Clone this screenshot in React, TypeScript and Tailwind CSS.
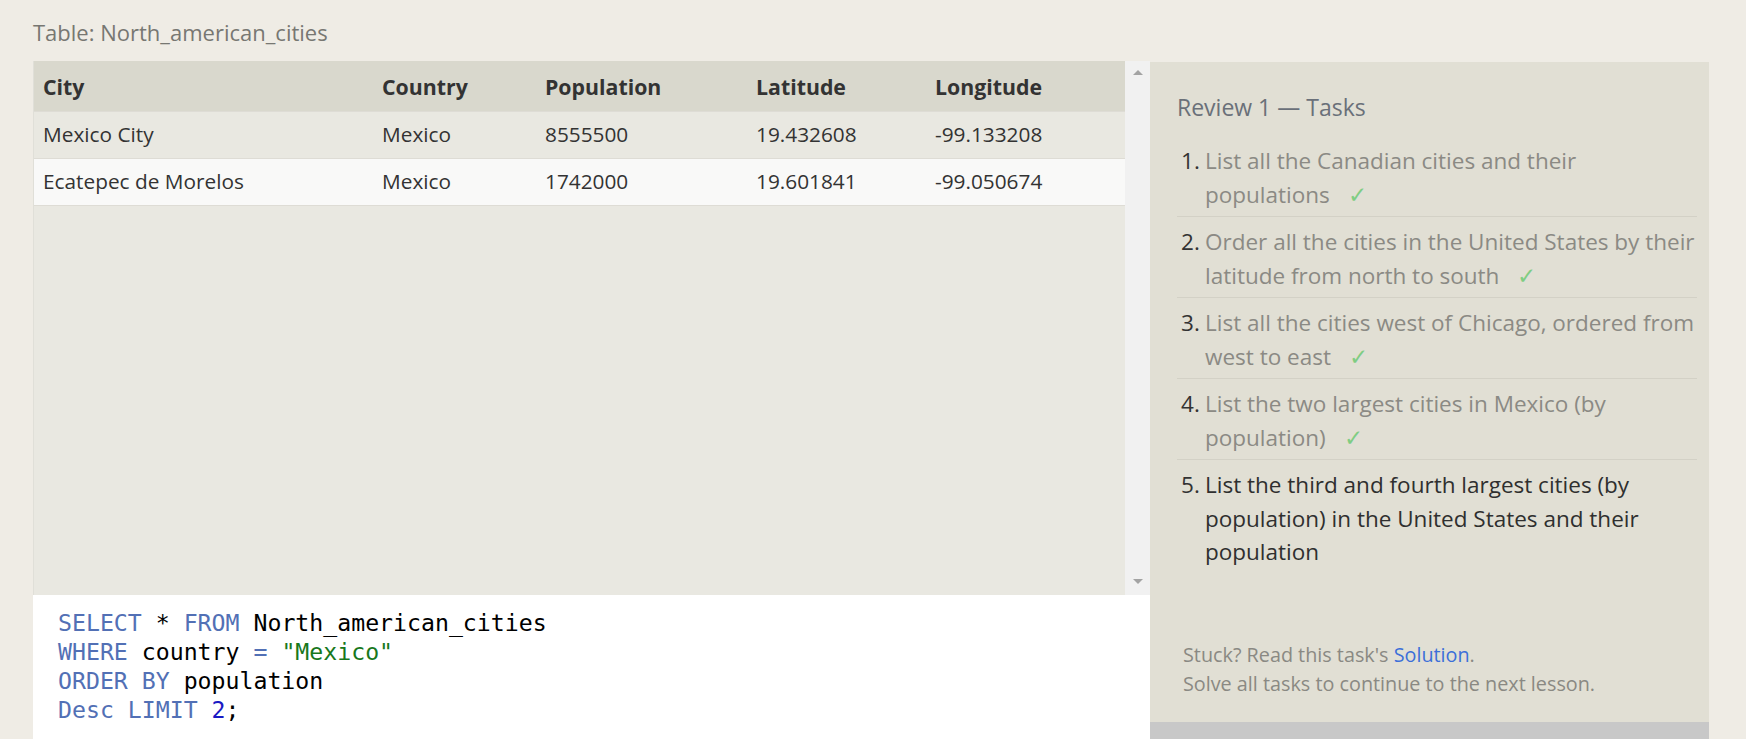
const rows = [
  { city: 'Mexico City', country: 'Mexico', population: '8555500', lat: '19.432608', lng: '-99.133208' },
  { city: 'Ecatepec de Morelos', country: 'Mexico', population: '1742000', lat: '19.601841', lng: '-99.050674' },
]

const tasks = [
  { text: 'List all the Canadian cities and their populations', done: true },
  { text: 'Order all the cities in the United States by their latitude from north to south', done: true },
  { text: 'List all the cities west of Chicago, ordered from west to east', done: true },
  { text: 'List the two largest cities in Mexico (by population)', done: true },
  { text: 'List the third and fourth largest cities (by population) in the United States and their population', done: false },
]

const cols = 'grid grid-cols-[339px_163px_211px_179px_1fr] px-[9px]'

export default function App() {
  return (
    <div className="min-h-screen bg-[#efece5] pl-[33px] font-['Open_Sans',sans-serif] overflow-hidden">
      {/* title */}
      <div className="h-[61px] flex items-center pt-[3px] text-[22px] text-[#777772]">
        Table: North_american_cities
      </div>

      <div className="flex items-start">
        {/* left: results + editor */}
        <div className="w-[1117px] flex flex-col">
          <div className="flex h-[534px]">
            <div className="w-[1092px] bg-[#e9e8e1] border-l border-[#e0dfd8] text-[20.8px] text-[#333]">
              <div className={`${cols} h-[50px] items-center bg-[#d9d8cd] font-bold text-[21.3px] pt-[2px]`}>
                <div>City</div>
                <div>Country</div>
                <div>Population</div>
                <div>Latitude</div>
                <div>Longitude</div>
              </div>
              {rows.map((r, i) => (
                <div
                  key={r.city}
                  className={`${cols} items-center border-t border-[#dedcd5] ${
                    i % 2 === 0 ? 'h-[47px] bg-[#e9e8e1]' : 'h-[48px] bg-[#f9f9f8] border-b'
                  }`}
                >
                  <div>{r.city}</div>
                  <div>{r.country}</div>
                  <div>{r.population}</div>
                  <div>{r.lat}</div>
                  <div>{r.lng}</div>
                </div>
              ))}
            </div>
            {/* scrollbar */}
            <div className="w-[25px] bg-[#f1f1f1] flex flex-col items-center justify-between pt-[9px] pb-[11px]">
              <div className="w-0 h-0 border-l-[5px] border-r-[5px] border-b-[5px] border-l-transparent border-r-transparent border-b-[#a3a3a3]" />
              <div className="w-0 h-0 border-l-[5px] border-r-[5px] border-t-[5px] border-l-transparent border-r-transparent border-t-[#a3a3a3]" />
            </div>
          </div>

          {/* editor */}
          <div className="h-[146px] bg-white pl-[25px] pt-[13px] font-['DejaVu_Sans_Mono',monospace] text-[23.2px] leading-[29px] text-black whitespace-pre">
            <div>
              <span className="text-[#5270b5]">SELECT</span> * <span className="text-[#5270b5]">FROM</span> North_american_cities
            </div>
            <div>
              <span className="text-[#5270b5]">WHERE</span> country <span className="text-[#5270b5]">=</span>{' '}
              <span className="text-[#18781c]">"Mexico"</span>
            </div>
            <div>
              <span className="text-[#5270b5]">ORDER BY</span> population
            </div>
            <div>
              <span className="text-[#5270b5]">Desc LIMIT</span> <span className="text-[#1a1ac4]">2</span>;
            </div>
          </div>
        </div>

        {/* right: tasks */}
        <div className="w-[559px] mt-[1px] flex flex-col">
          <div className="h-[660px] bg-[#e1dfd4] pl-[27px] pr-[12px] flex flex-col">
            <h2 className="mt-[29px] text-[23px] text-[#6a7079] leading-[32px]">Review 1 — Tasks</h2>
            <ol className="mt-[13px] text-[22.5px] leading-[33.5px]">
              {tasks.map((t, i) => (
                <li
                  key={i}
                  className={`flex pt-[8px] pb-[5px] ${i < tasks.length - 1 ? 'border-b border-[#d3d1c6]' : ''}`}
                >
                  <span className="w-[28px] shrink-0 text-[#333] pl-[4px]">{i + 1}.</span>
                  <span className={`flex-1 ${t.done ? 'text-[#8b8a84]' : 'text-[#2f2f2f]'}`}>
                    {t.text}
                    {t.done && <span className="ml-[18px] text-[#7fcd83]">✓</span>}
                  </span>
                </li>
              ))}
            </ol>
            <div className="mt-auto mb-[24px] pl-[6px] text-[19.8px] leading-[29px] text-[#8a8983]">
              <div>
                Stuck? Read this task's <span className="text-[#3c6fd9]">Solution</span>.
              </div>
              <div>Solve all tasks to continue to the next lesson.</div>
            </div>
          </div>
          <div className="h-[30px] bg-[#c8c8c8]" />
        </div>
      </div>
    </div>
  )
}
